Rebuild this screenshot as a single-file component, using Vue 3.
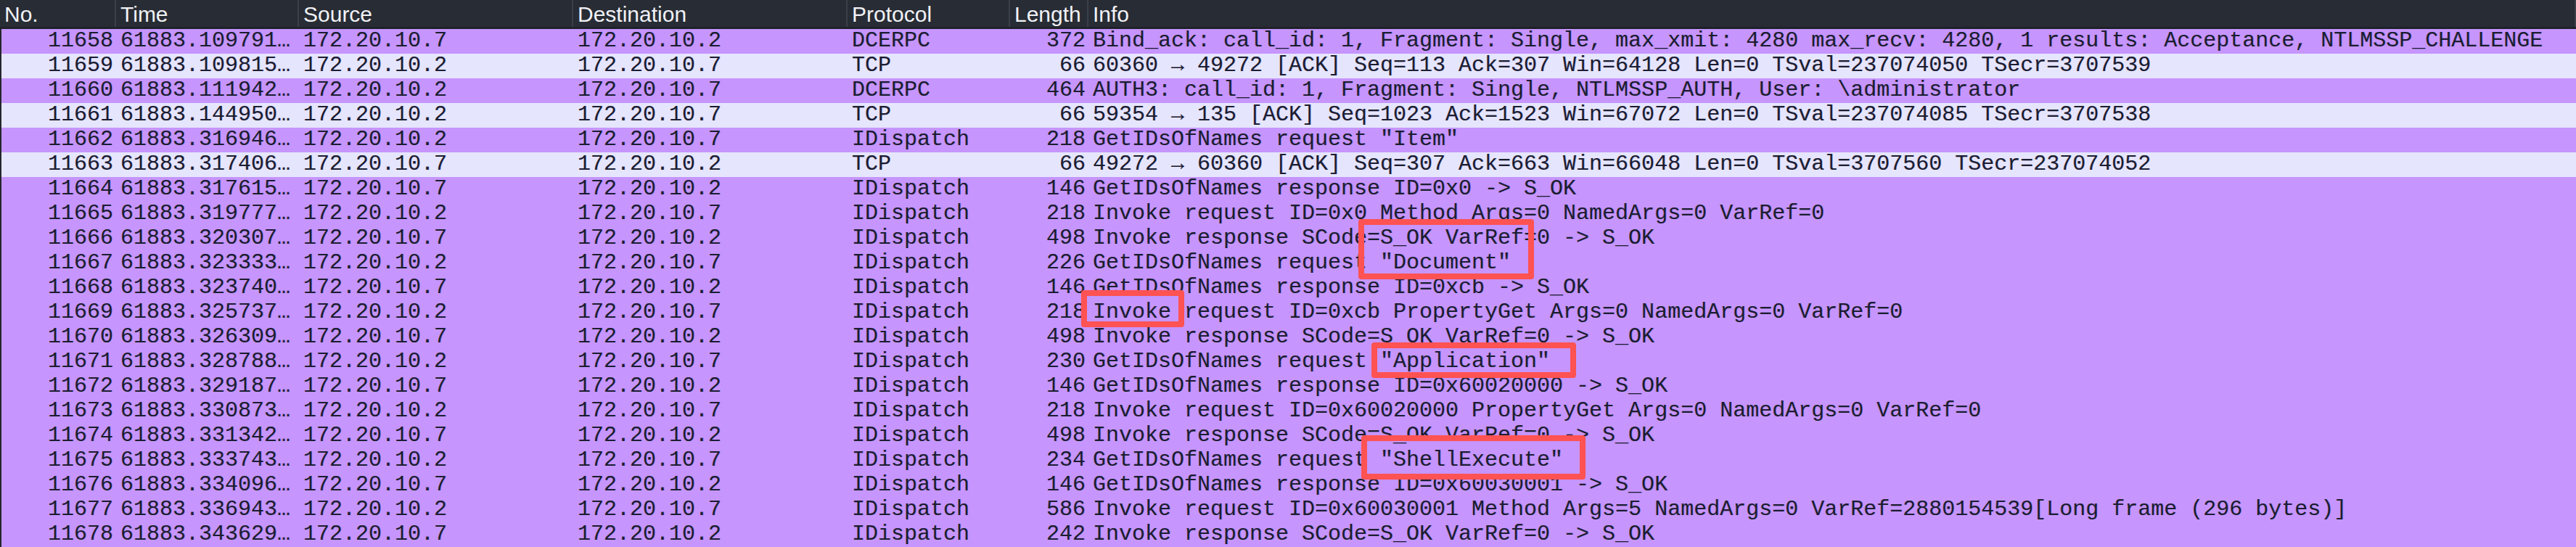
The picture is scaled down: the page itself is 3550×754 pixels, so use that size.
<script setup>
const rows = [
  ['11658','61883.109791…','172.20.10.7','172.20.10.2','DCERPC','372','Bind_ack: call_id: 1, Fragment: Single, max_xmit: 4280 max_recv: 4280, 1 results: Acceptance, NTLMSSP_CHALLENGE'],
  ['11659','61883.109815…','172.20.10.2','172.20.10.7','TCP','66','60360 → 49272 [ACK] Seq=113 Ack=307 Win=64128 Len=0 TSval=237074050 TSecr=3707539'],
  ['11660','61883.111942…','172.20.10.2','172.20.10.7','DCERPC','464','AUTH3: call_id: 1, Fragment: Single, NTLMSSP_AUTH, User: \\administrator'],
  ['11661','61883.144950…','172.20.10.2','172.20.10.7','TCP','66','59354 → 135 [ACK] Seq=1023 Ack=1523 Win=67072 Len=0 TSval=237074085 TSecr=3707538'],
  ['11662','61883.316946…','172.20.10.2','172.20.10.7','IDispatch','218','GetIDsOfNames request "Item"'],
  ['11663','61883.317406…','172.20.10.7','172.20.10.2','TCP','66','49272 → 60360 [ACK] Seq=307 Ack=663 Win=66048 Len=0 TSval=3707560 TSecr=237074052'],
  ['11664','61883.317615…','172.20.10.7','172.20.10.2','IDispatch','146','GetIDsOfNames response ID=0x0 -> S_OK'],
  ['11665','61883.319777…','172.20.10.2','172.20.10.7','IDispatch','218','Invoke request ID=0x0 Method Args=0 NamedArgs=0 VarRef=0'],
  ['11666','61883.320307…','172.20.10.7','172.20.10.2','IDispatch','498','Invoke response SCode=S_OK VarRef=0 -> S_OK'],
  ['11667','61883.323333…','172.20.10.2','172.20.10.7','IDispatch','226','GetIDsOfNames request "Document"'],
  ['11668','61883.323740…','172.20.10.7','172.20.10.2','IDispatch','146','GetIDsOfNames response ID=0xcb -> S_OK'],
  ['11669','61883.325737…','172.20.10.2','172.20.10.7','IDispatch','218','Invoke request ID=0xcb PropertyGet Args=0 NamedArgs=0 VarRef=0'],
  ['11670','61883.326309…','172.20.10.7','172.20.10.2','IDispatch','498','Invoke response SCode=S_OK VarRef=0 -> S_OK'],
  ['11671','61883.328788…','172.20.10.2','172.20.10.7','IDispatch','230','GetIDsOfNames request "Application"'],
  ['11672','61883.329187…','172.20.10.7','172.20.10.2','IDispatch','146','GetIDsOfNames response ID=0x60020000 -> S_OK'],
  ['11673','61883.330873…','172.20.10.2','172.20.10.7','IDispatch','218','Invoke request ID=0x60020000 PropertyGet Args=0 NamedArgs=0 VarRef=0'],
  ['11674','61883.331342…','172.20.10.7','172.20.10.2','IDispatch','498','Invoke response SCode=S_OK VarRef=0 -> S_OK'],
  ['11675','61883.333743…','172.20.10.2','172.20.10.7','IDispatch','234','GetIDsOfNames request "ShellExecute"'],
  ['11676','61883.334096…','172.20.10.7','172.20.10.2','IDispatch','146','GetIDsOfNames response ID=0x60030001 -> S_OK'],
  ['11677','61883.336943…','172.20.10.2','172.20.10.7','IDispatch','586','Invoke request ID=0x60030001 Method Args=5 NamedArgs=0 VarRef=2880154539[Long frame (296 bytes)]'],
  ['11678','61883.343629…','172.20.10.7','172.20.10.2','IDispatch','242','Invoke response SCode=S_OK VarRef=0 -> S_OK'],
]
const heads = ['No.','Time','Source','Destination','Protocol','Length','Info']
const light = (r) => r[4] === 'TCP'
const marks = [
  { k: 'a', x: 1872, y: 302, w: 242, h: 83 },
  { k: 'b', x: 1490, y: 400, w: 142, h: 51 },
  { k: 'c', x: 1890, y: 472, w: 282, h: 49 },
  { k: 'd', x: 1876, y: 600, w: 309, h: 61 },
]
const boxStyle = (m) => ({ left: m.x + 'px', top: m.y + 'px', width: m.w + 'px', height: m.h + 'px' })
</script>

<template>
  <div class="pane">
    <div class="head">
      <div v-for="h in heads" :key="h" class="hcell">{{ h }}</div>
    </div>
    <div class="list">
      <div v-for="r in rows" :key="r[0]" class="row" :class="{ light: light(r) }">
        <div class="cell num">{{ r[0] }}</div>
        <div class="cell">{{ r[1] }}</div>
        <div class="cell">{{ r[2] }}</div>
        <div class="cell">{{ r[3] }}</div>
        <div class="cell">{{ r[4] }}</div>
        <div class="cell num">{{ r[5] }}</div>
        <div class="cell">{{ r[6] }}</div>
      </div>
    </div>
    <div v-for="m in marks" :key="m.k" class="mark" :style="boxStyle(m)"></div>
  </div>
</template>

<style scoped>
.pane {
  position: relative;
  width: 3550px;
  height: 754px;
  overflow: hidden;
  background: #282c34;
}
.head, .row {
  display: grid;
  grid-template-columns: 160px 252px 378px 378px 224px 108px 1fr;
}
.head {
  height: 40px;
  box-sizing: border-box;
  border-bottom: 3px solid #1f2228;
  background: #282c34;
  color: #f0f2f6;
  font-family: "Liberation Sans", sans-serif;
  font-size: 30px;
  line-height: 39px;
}
.hcell {
  padding-left: 6px;
  box-shadow: inset -2px 0 0 #3a3f4a;
  height: 37px;
  white-space: nowrap;
}
.list {
  padding-left: 2px;
  background: #23262d;
}
.row {
  height: 34px;
  margin-left: -2px;
  background: linear-gradient(#c695fd, #c695fd) 2px 0 no-repeat;
  color: #1b1d30;
  font-family: "Liberation Mono", monospace;
  font-size: 30px;
  line-height: 32px;
  white-space: pre;
  text-shadow: 0.6px 0 rgba(40, 80, 230, 0.3), -0.6px 0 rgba(150, 70, 30, 0.25);
}
.row.light {
  background: linear-gradient(#e6e5fe, #e6e5fe) 2px 0 no-repeat;
}
.cell { padding-left: 6px; overflow: hidden; }
.num { text-align: right; padding: 0 4px 0 0; }
.mark {
  position: absolute;
  box-sizing: border-box;
  border: 8px solid #ff5252;
  border-radius: 4px;
}
</style>

<style>
html, body { background: #282c34; }
</style>
